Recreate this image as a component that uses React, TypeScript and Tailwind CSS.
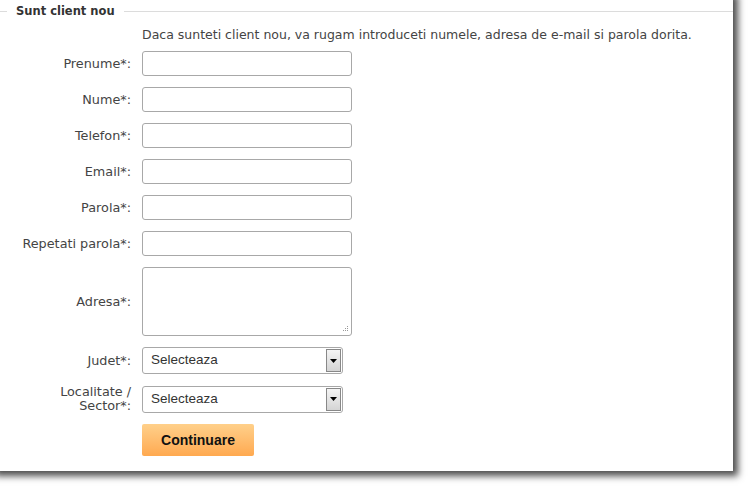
import type { ReactNode } from "react";

const labelFont = { fontFamily: '"DejaVu Sans", Tahoma, sans-serif' };

const fields = ["Prenume*:", "Nume*:", "Telefon*:", "Email*:", "Parola*:", "Repetati parola*:"];

function Row({ label, children }: { label: ReactNode; children: ReactNode }) {
  return (
    <div className="flex items-center">
      <div className="w-[132px] pr-px text-right text-[12.8px] leading-[14px] text-[#444]">{label}</div>
      <div className="ml-[10px]">{children}</div>
    </div>
  );
}

function SelectBox() {
  return (
    <div
      className="flex h-[27px] w-[201px] items-stretch rounded-[3px] border border-[#a8a8a8] bg-white"
      style={{ fontFamily: '"Liberation Sans", Arial, sans-serif' }}
    >
      <div className="flex flex-1 items-center pl-2 text-[13.5px] text-[#333]">Selecteaza</div>
      <div className="m-px flex w-[15px] items-center justify-center border border-[#888] bg-gradient-to-b from-[#f4f4f4] to-[#d4d4d4]">
        <svg width="7" height="4" viewBox="0 0 7 4">
          <path d="M0 0h7L3.5 4z" fill="#000" />
        </svg>
      </div>
    </div>
  );
}

export default function App() {
  return (
    <div className="h-[500px] w-[755px] overflow-hidden bg-white" style={labelFont}>
      <div className="-ml-[10px] -mt-[10px] h-[481px] w-[743px] bg-white pl-[10px] pt-[10px] shadow-[5px_5px_7px_rgba(0,0,0,0.7)]">
        <div className="flex items-center pt-[4px]">
          <div className="h-px w-[7px] bg-[#dcdcdc]" />
          <div className="px-[9px] text-[11.5px] font-bold leading-[14px] text-[#333]">Sunt client nou</div>
          <div className="h-px flex-1 bg-[#dcdcdc]" />
        </div>
        <div className="mt-[10px] pl-[142px] text-[12.5px] leading-[14px] text-[#444]">
          Daca sunteti client nou, va rugam introduceti numele, adresa de e-mail si parola dorita.
        </div>
        <div className="mt-[9px] flex flex-col gap-[11px]">
          {fields.map((f) => (
            <Row key={f} label={f}>
              <div className="h-[25px] w-[210px] rounded-[3px] border border-[#a8a8a8] bg-white" />
            </Row>
          ))}
          <Row label="Adresa*:">
            <div className="relative h-[69px] w-[210px] rounded-[3px] border border-[#a8a8a8] bg-white">
              <svg className="absolute bottom-[2px] right-[2px]" width="8" height="8" viewBox="0 0 8 8">
                <g fill="#999">
                  <rect x="6" y="1" width="1" height="1" />
                  <rect x="4" y="3" width="1" height="1" />
                  <rect x="6" y="3" width="1" height="1" />
                  <rect x="2" y="5" width="1" height="1" />
                  <rect x="4" y="5" width="1" height="1" />
                  <rect x="6" y="5" width="1" height="1" />
                </g>
              </svg>
            </div>
          </Row>
          <Row label="Judet*:">
            <SelectBox />
          </Row>
          <Row
            label={
              <>
                Localitate /
                <br />
                Sector*:
              </>
            }
          >
            <SelectBox />
          </Row>
          <div className="pl-[142px]">
            <button
              className="h-[32px] w-[112px] rounded-[2px] bg-gradient-to-b from-[#ffd08a] to-[#ffa94f] text-[14px] font-bold text-[#111]"
              style={{ fontFamily: '"Liberation Sans", Arial, sans-serif' }}
            >
              Continuare
            </button>
          </div>
        </div>
      </div>
    </div>
  );
}
